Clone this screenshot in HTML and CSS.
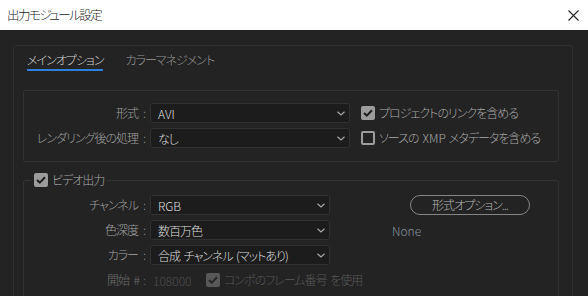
FILE: index.html
```html
<!DOCTYPE html>
<html lang="ja">
<head>
<meta charset="utf-8">
<title>出力モジュール設定</title>
<link rel="stylesheet" href="styles.css">
</head>
<body>
<div class="window">
  <header class="titlebar">
    <span class="title">出力モジュール設定</span>
    <svg class="close" width="11" height="11" viewBox="0 0 11 11"><path d="M0.5 0.5 L10.5 10.5 M10.5 0.5 L0.5 10.5" stroke="#222" stroke-width="1.1" fill="none"/></svg>
  </header>
  <main class="main">
    <section class="panel">
      <nav class="tabs">
        <span class="tab active">メインオプション</span>
        <span class="tab">カラーマネジメント</span>
      </nav>

      <div class="group">
        <div class="grid grid-a">
          <span class="label">形式<span class="colon">:</span></span>
          <div class="select"><span class="latin">AVI</span><svg class="chev" width="8" height="5" viewBox="0 0 8 5"><path d="M0.5 0.8 L4 4 L7.5 0.8" stroke="#a8a8a8" stroke-width="1.2" fill="none"/></svg></div>
          <label class="check"><span class="box on"><svg width="10" height="8" viewBox="0 0 10 8"><path d="M1 4 L3.8 6.6 L9 1.2" stroke="#1e1e1e" stroke-width="2" fill="none"/></svg></span><span>プロジェクトのリンクを含める</span></label>

          <span class="label">レンダリング後の処理<span class="colon">:</span></span>
          <div class="select"><span>なし</span><svg class="chev" width="8" height="5" viewBox="0 0 8 5"><path d="M0.5 0.8 L4 4 L7.5 0.8" stroke="#a8a8a8" stroke-width="1.2" fill="none"/></svg></div>
          <label class="check"><span class="box"></span><span>ソースの<span class="latin xmp">XMP</span>メタデータを含める</span></label>
        </div>
      </div>

      <fieldset class="fieldset">
        <legend class="legend"><span class="box on"><svg width="10" height="8" viewBox="0 0 10 8"><path d="M1 4 L3.8 6.6 L9 1.2" stroke="#1e1e1e" stroke-width="2" fill="none"/></svg></span><span>ビデオ出力</span></legend>
        <div class="grid grid-b">
          <span class="label">チャンネル<span class="colon">:</span></span>
          <div class="select"><span class="latin">RGB</span><svg class="chev" width="8" height="5" viewBox="0 0 8 5"><path d="M0.5 0.8 L4 4 L7.5 0.8" stroke="#a8a8a8" stroke-width="1.2" fill="none"/></svg></div>
          <div class="side"><button class="pill">形式オプション...</button></div>

          <span class="label">色深度<span class="colon">:</span></span>
          <div class="select"><span>数百万色</span><svg class="chev" width="8" height="5" viewBox="0 0 8 5"><path d="M0.5 0.8 L4 4 L7.5 0.8" stroke="#a8a8a8" stroke-width="1.2" fill="none"/></svg></div>
          <div class="side"><span class="none latin">None</span></div>

          <span class="label">カラー<span class="colon">:</span></span>
          <div class="select"><span class="spaced">合成 チャンネル (マットあり)</span><svg class="chev" width="8" height="5" viewBox="0 0 8 5"><path d="M0.5 0.8 L4 4 L7.5 0.8" stroke="#a8a8a8" stroke-width="1.2" fill="none"/></svg></div>
          <div class="side"></div>

          <span class="label dim-label">開始 <span class="hash">#</span><span class="colon">:</span></span>
          <div class="start">
            <span class="num latin">108000</span>
            <label class="check disabled"><span class="box on off"><svg width="10" height="8" viewBox="0 0 10 8"><path d="M1 4 L3.8 6.6 L9 1.2" stroke="#262626" stroke-width="2" fill="none"/></svg></span><span class="spaced">コンポのフレーム番号 を使用</span></label>
          </div>
        </div>
      </fieldset>
    </section>
  </main>
</div>
</body>
</html>
```

FILE: styles.css
```css
html, body {
  margin: 0;
  padding: 0;
  height: 100%;
  overflow: hidden;
}

body {
  background: #232323;
  font-family: "Noto Sans CJK JP", "Noto Sans", sans-serif;
  font-feature-settings: "palt";
  font-size: 12px;
  font-weight: 300;
  letter-spacing: -1px;
  color: #a8a8a8;
}

.latin {
  letter-spacing: 0;
}

.spaced {
  word-spacing: 2px;
}

.colon {
  margin-left: 5px;
}

.hash {
  letter-spacing: 0;
  margin-left: 3px;
}

.dim-label .colon {
  margin-left: 3px;
}

.xmp {
  margin: 0 3px 0 4px;
}

.titlebar {
  height: 30px;
  background: #ffffff;
  display: flex;
  align-items: center;
  justify-content: space-between;
  padding: 0 9px 0 7px;
}

.title {
  font-size: 12.5px;
  letter-spacing: -1.5px;
  color: #1a1a1a;
  line-height: 16px;
}

.main {
  padding: 15px 15px 0 13px;
}

.panel {
  border: 1px solid #2f2f2f;
  border-radius: 3px;
  padding: 6px 13px 40px 9px;
  height: 400px;
}

.tabs {
  display: flex;
  gap: 22px;
  padding-left: 4px;
  line-height: 16px;
}

.tab {
  color: #9a9a9a;
  padding-bottom: 1px;
  border-bottom: 2px solid transparent;
}

.tab.active {
  color: #d6d6d6;
  border-bottom-color: #2f80dc;
}

.group {
  margin-top: 19px;
  border: 1px solid #323232;
  border-radius: 2px;
  padding: 12px 0 13px 0;
}

.grid {
  display: grid;
  column-gap: 5px;
  row-gap: 5px;
  align-items: center;
}

.grid-a {
  grid-template-columns: 121px 200px auto;
}

.grid-b {
  grid-template-columns: 121px 180px 1fr;
}

.label {
  text-align: right;
  color: #a0a0a0;
  line-height: 16px;
  white-space: nowrap;
}

.select {
  height: 20px;
  box-sizing: border-box;
  background: #1c1c1c;
  border: 1px solid #303030;
  border-radius: 2px;
  display: flex;
  align-items: center;
  justify-content: space-between;
  padding: 0 4px 0 7px;
  color: #dcdcdc;
}

.chev {
  display: block;
}

.check {
  display: flex;
  align-items: center;
  gap: 4px;
  color: #a8a8a8;
  margin-left: 6px;
  white-space: nowrap;
  line-height: 16px;
}

.box {
  width: 14px;
  height: 14px;
  box-sizing: border-box;
  border: 2px solid #9c9c9c;
  border-radius: 2px;
  display: flex;
  align-items: center;
  justify-content: center;
  flex: none;
}

.box.on {
  background: #9c9c9c;
}

.box.off {
  background: #585858;
  border-color: #585858;
}

.fieldset {
  margin: 11px 0 0 0;
  padding: 0 0 20px 0;
  border: 1px solid #323232;
  border-radius: 2px;
  min-width: 0;
}

.legend {
  margin-left: 7px;
  padding: 0 3px;
  display: flex;
  align-items: center;
  gap: 4px;
  line-height: 14px;
  color: #a8a8a8;
}

.grid-b {
  margin-top: 8px;
}

.side {
  padding-left: 57px;
  height: 20px;
  display: flex;
  align-items: center;
}

.pill {
  margin-left: 18px;
  width: 120px;
  height: 20px;
  box-sizing: border-box;
  border: 1.5px solid #858585;
  border-radius: 10px;
  background: transparent;
  color: #b8b8b8;
  font-family: inherit;
  font-size: 12px;
  font-weight: 300;
  letter-spacing: -1px;
  font-feature-settings: "palt";
  padding: 0;
  line-height: 16px;
}

.none {
  color: #8a939c;
}

.dim-label {
  color: #6e6e6e;
}

.start {
  grid-column: 2 / span 2;
  height: 20px;
  display: flex;
  align-items: center;
  padding-left: 3px;
}

.num {
  color: #505050;
  width: 48px;
}

.check.disabled {
  color: #585858;
  margin-left: 5px;
}
```
